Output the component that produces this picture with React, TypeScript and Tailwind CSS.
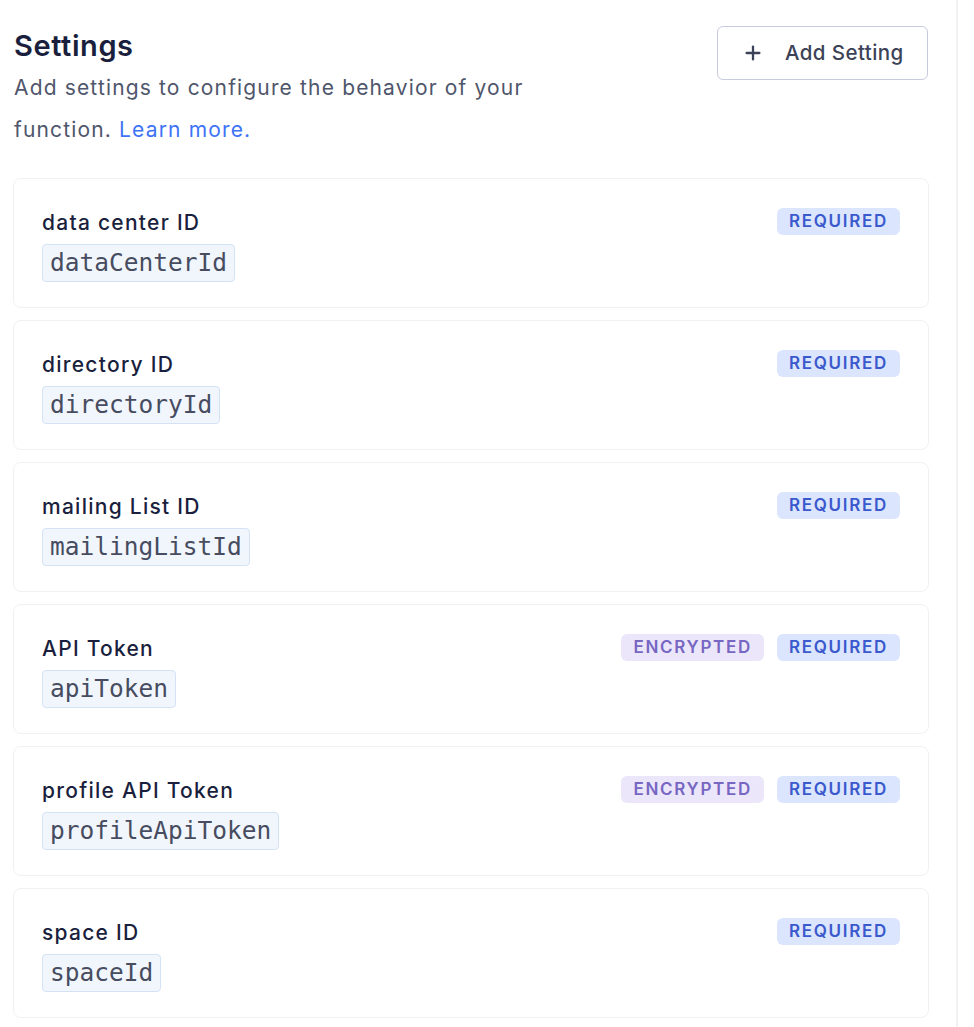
import { Plus } from "lucide-react";

type Setting = {
  label: string;
  key: string;
  encrypted?: boolean;
};

const settings: Setting[] = [
  { label: "data center ID", key: "dataCenterId" },
  { label: "directory ID", key: "directoryId" },
  { label: "mailing List ID", key: "mailingListId" },
  { label: "API Token", key: "apiToken", encrypted: true },
  { label: "profile API Token", key: "profileApiToken", encrypted: true },
  { label: "space ID", key: "spaceId" },
];

export default function App() {
  return (
    <div className="flex min-h-[1027px] bg-white font-['Inter',sans-serif]">
      <main className="w-[958px] shrink-0 border-r-2 border-[#f1f1f4] pl-[13px] pr-[27px] pt-[28px] pb-4">
        {/* Header */}
        <div className="flex items-start justify-between">
          <div className="pl-px">
            <h1 className="text-[29px] leading-[36px] font-semibold tracking-[0.02em] text-[#1a1f3d]">Settings</h1>
            <p className="mt-[3px] w-[560px] text-[21px] leading-[42px] tracking-[0.055em] text-[#4f566b]">
              Add settings to configure the behavior of your
              <br />
              function. <span className="text-[#3e73f5]">Learn more.</span>
            </p>
          </div>
          <button className="-mt-[2px] mr-px flex h-[54px] w-[211px] items-center gap-[21px] rounded-md border-[1.5px] border-[#c7cbdc] pl-6 text-[20.5px] font-medium tracking-[0.02em] text-[#3c4257]">
            <Plus className="h-[22px] w-[22px] text-[#3c4257]" strokeWidth={2.5} />
            Add Setting
          </button>
        </div>

        {/* Settings list */}
        <div className="mt-[27px] flex flex-col gap-3">
          {settings.map((s) => (
            <div
              key={s.key}
              className="flex items-start justify-between rounded-lg border border-[#f0f1f4] px-7 pt-[29px] pb-[25px]"
            >
              <div>
                <div className="text-[21px] leading-[30px] font-medium tracking-[0.06em] text-[#1a1f3d]">{s.label}</div>
                <code className="mt-[6px] flex h-[38px] w-fit items-center rounded border border-[#d3e2f5] bg-[#f1f6fd] px-[7px] font-['DejaVu_Sans_Mono',monospace] text-[24.5px] text-[#474c60]">
                  {s.key}
                </code>
              </div>
              <div className="flex items-center gap-[13px]">
                {s.encrypted && (
                  <span className="flex h-[27px] items-center rounded-md bg-[#ebe6fa] px-3 text-[17px] font-semibold tracking-[0.1em] text-[#7766c2]">
                    ENCRYPTED
                  </span>
                )}
                <span className="flex h-[27px] items-center rounded-md bg-[#dbe5fe] px-3 text-[17px] font-semibold tracking-[0.1em] text-[#3a59cc]">
                  REQUIRED
                </span>
              </div>
            </div>
          ))}
        </div>
      </main>
    </div>
  );
}
